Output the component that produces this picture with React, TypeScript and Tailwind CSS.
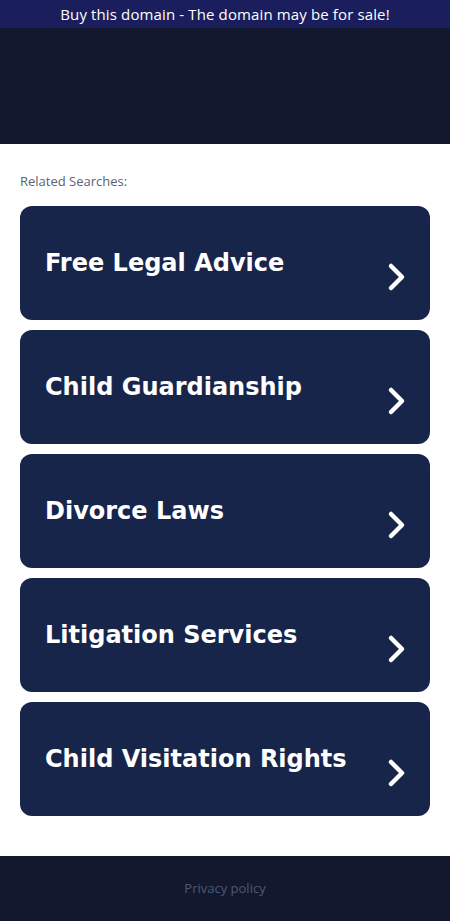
import React from "react";

const searches = [
  "Free Legal Advice",
  "Child Guardianship",
  "Divorce Laws",
  "Litigation Services",
  "Child Visitation Rights",
];

function Chevron() {
  return (
    <svg width="20" height="30" viewBox="0 0 20 30" aria-hidden="true" className="mt-[28px] shrink-0">
      <polyline
        points="5,4 16,15 5,26"
        fill="none"
        stroke="white"
        strokeWidth="4.5"
        strokeLinecap="round"
        strokeLinejoin="round"
      />
    </svg>
  );
}

export default function App() {
  return (
    <div className="min-h-screen bg-white">
      <div className="flex h-[28px] items-center justify-center bg-[#1b1e5c] font-['Open_Sans',sans-serif] text-[15px] font-medium tracking-[0.13px] text-white">
        Buy this domain - The domain may be for sale!
      </div>
      <div className="h-[116px] bg-[#12182d]" />

      <main className="px-5 pt-[28px] pb-10">
        <p className="mb-[16px] font-['Open_Sans',sans-serif] text-[13px] leading-[18px] font-medium text-[#5b6272]">
          Related Searches:
        </p>
        <div className="flex flex-col gap-[10px]">
          {searches.map((s) => (
            <a
              key={s}
              href="#"
              className="flex h-[114px] items-center justify-between rounded-[12px] bg-[#18254b] pr-[24px] pl-[25px]"
            >
              <span className="font-['DejaVu_Sans',sans-serif] text-[24px] font-bold text-white">
                {s}
              </span>
              <Chevron />
            </a>
          ))}
        </div>
      </main>

      <footer className="flex h-[65px] items-center justify-center bg-[#12182d]">
        <a href="#" className="font-['Open_Sans',sans-serif] text-[13px] text-[#4f5871]">
          Privacy policy
        </a>
      </footer>
    </div>
  );
}
